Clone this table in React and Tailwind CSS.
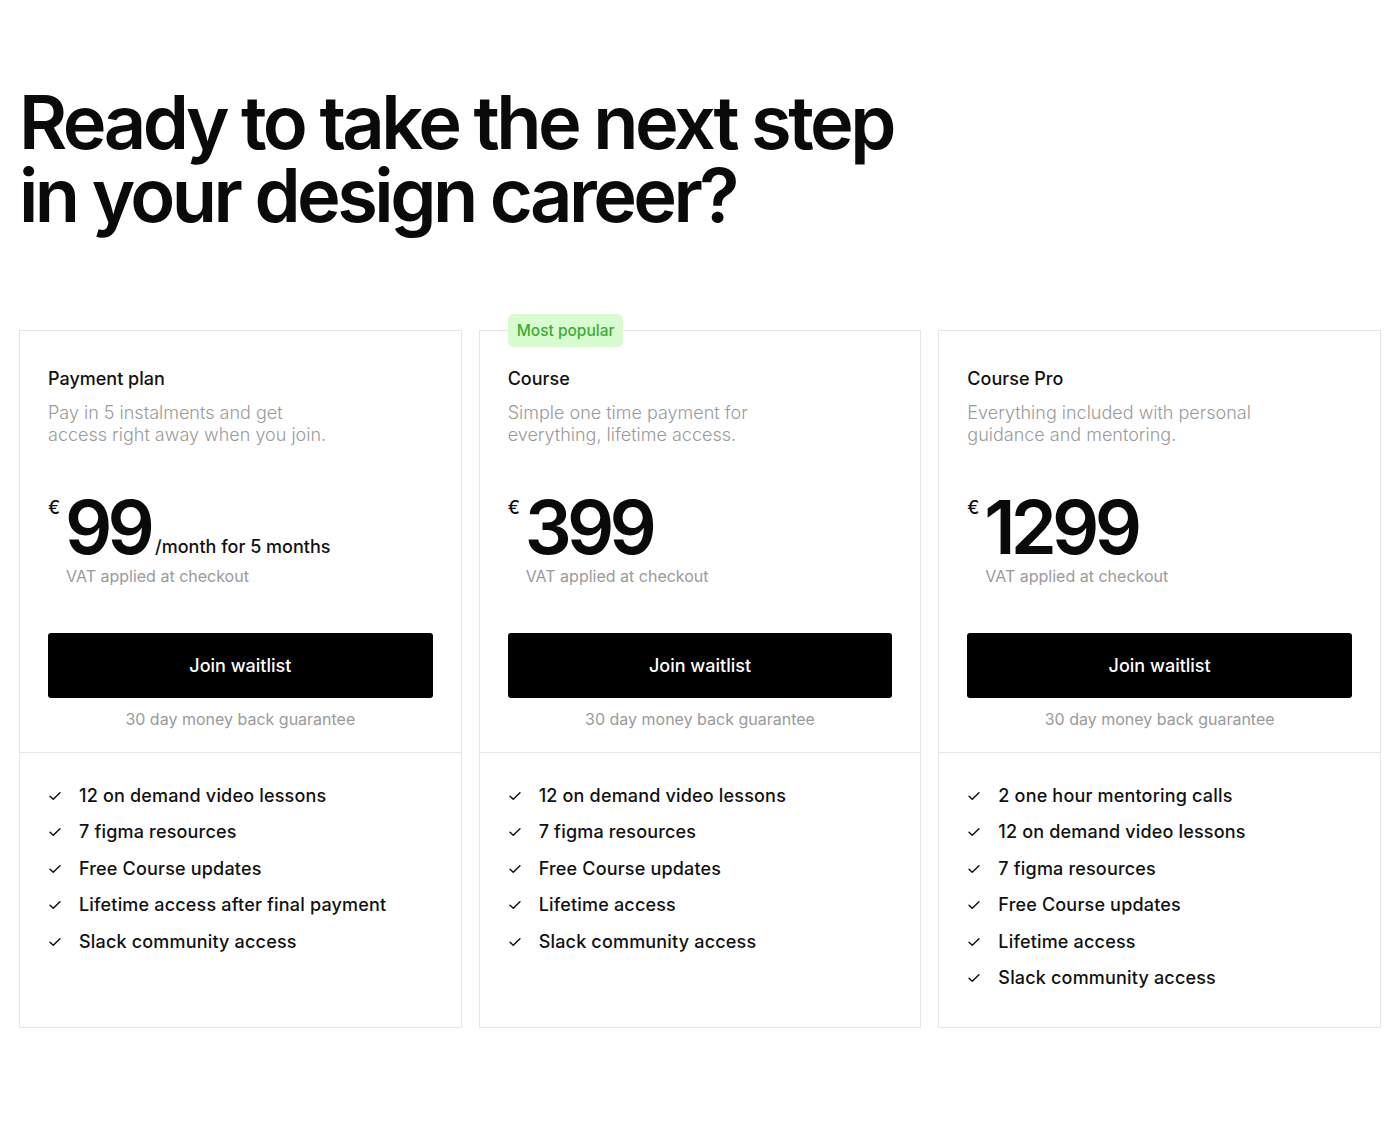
import React from "react";

const Check = () => (
  <svg width="14" height="14" viewBox="0 0 24 24" fill="none" stroke="#111" strokeWidth="2.6" strokeLinecap="round" strokeLinejoin="round" className="shrink-0">
    <path d="M3.5 12.5l5.5 5L20.5 6.5" />
  </svg>
);

const plans = [
  {
    name: "Payment plan",
    desc: ["Pay in 5 instalments and get", "access right away when you join."],
    price: "99",
    suffix: "/month for 5 months",
    features: [
      "12 on demand video lessons",
      "7 figma resources",
      "Free Course updates",
      "Lifetime access after final payment",
      "Slack community access",
    ],
  },
  {
    name: "Course",
    popular: true,
    desc: ["Simple one time payment for", "everything, lifetime access."],
    price: "399",
    features: [
      "12 on demand video lessons",
      "7 figma resources",
      "Free Course updates",
      "Lifetime access",
      "Slack community access",
    ],
  },
  {
    name: "Course Pro",
    desc: ["Everything included with personal", "guidance and mentoring."],
    price: "1299",
    features: [
      "2 one hour mentoring calls",
      "12 on demand video lessons",
      "7 figma resources",
      "Free Course updates",
      "Lifetime access",
      "Slack community access",
    ],
  },
];

function Card({ plan }) {
  return (
    <div className="relative flex flex-col border border-[#e6e6e6] bg-white">
      {plan.popular && (
        <div className="absolute left-[28px] top-[-17px] rounded-[6px] bg-[#d9fbd0] px-[9px] py-[6px] text-[15.5px] leading-[21px] font-medium text-[#3aae2e]">
          Most popular
        </div>
      )}
      <div className="px-[28px] pt-[36px] pb-[22px]">
        <div className="text-[18px] leading-[24px] font-medium text-[#111]">{plan.name}</div>
        <div className="mt-[11px] text-[18px] leading-[22px] font-light text-[#9a9a9a]">
          {plan.desc[0]}
          <br />
          {plan.desc[1]}
        </div>
        <div className="mt-[47px] flex items-start">
          <span className="mt-[5px] w-[17px] text-[18px] leading-[20px] font-medium text-[#111]">€</span>
          <span className="text-[74px] leading-[68px] font-semibold tracking-[-0.065em] text-[#0a0a0a]">{plan.price}</span>
          {plan.suffix && (
            <span className="ml-[5px] self-end mb-[2px] text-[18px] leading-[24px] font-medium text-[#111]">{plan.suffix}</span>
          )}
        </div>
        <div className="ml-[18px] mt-[4px] text-[16px] leading-[22px] text-[#9a9a9a]">VAT applied at checkout</div>
        <button className="mt-[46px] flex h-[65px] w-full items-center justify-center rounded-[3px] bg-black text-[18px] font-medium text-white">
          Join waitlist
        </button>
        <div className="mt-[10px] text-center text-[16px] leading-[22px] text-[#9a9a9a]">30 day money back guarantee</div>
      </div>
      <div className="border-t border-[#e6e6e6] px-[28px] pt-[31px] pb-[37px]">
        <ul className="flex flex-col gap-[12.4px]">
          {plan.features.map((f) => (
            <li key={f} className="flex items-center gap-[17px] text-[18px] leading-[24px] font-medium tracking-[0.01em] text-[#111]">
              <Check />
              <span>{f}</span>
            </li>
          ))}
        </ul>
      </div>
    </div>
  );
}

export default function App() {
  return (
    <div className="min-h-[1124px] bg-white px-[19px] pt-[86px] pb-[96px]" style={{ fontFamily: "Inter, 'Noto Sans', sans-serif" }}>
      <h1 className="text-[74px] leading-[73px] font-semibold tracking-[-0.048em] text-[#0a0a0a]">
        Ready to take the next step
        <br />
        in your design career?
      </h1>
      <div className="mt-[98px] grid grid-cols-3 gap-[17px]">
        {plans.map((p) => (
          <Card key={p.name} plan={p} />
        ))}
      </div>
    </div>
  );
}
